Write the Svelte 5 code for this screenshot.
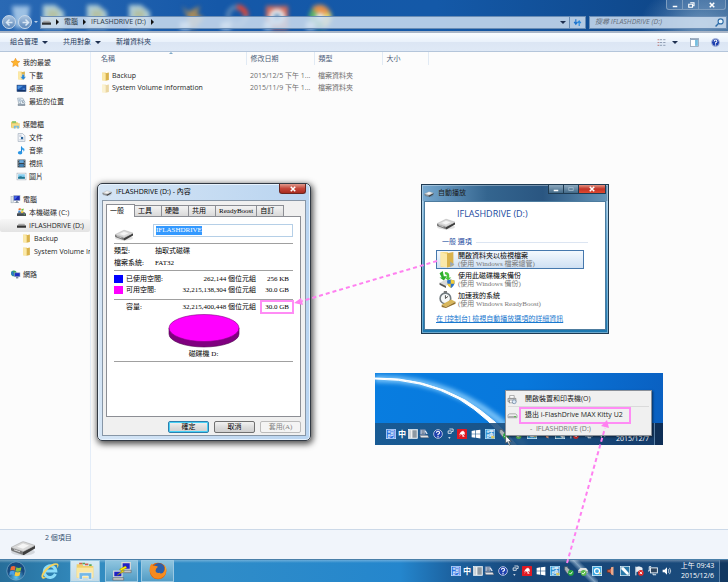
<script lang="ts">
  const groups = [
    {
      head: { icon: 'star', label: '我的最愛' },
      items: [
        { icon: 'download', label: '下載' },
        { icon: 'desktop', label: '桌面' },
        { icon: 'recent', label: '最近的位置' }
      ]
    },
    {
      head: { icon: 'library', label: '媒體櫃' },
      items: [
        { icon: 'doc', label: '文件' },
        { icon: 'music', label: '音樂' },
        { icon: 'video', label: '視訊' },
        { icon: 'picture', label: '圖片' }
      ]
    },
    {
      head: { icon: 'computer', label: '電腦' },
      items: [
        { icon: 'osdisk', label: '本機磁碟 (C:)' },
        { icon: 'usbdisk', label: 'IFLASHDRIVE (D:)', selected: true },
        { icon: 'folder', label: 'Backup', deep: true },
        { icon: 'folder', label: 'System Volume Information', deep: true }
      ]
    },
    { head: { icon: 'network', label: '網路' }, items: [] }
  ];

  const files = [
    { icon: 'folder', name: 'Backup', date: '2015/12/5 下午 1...', type: '檔案資料夾' },
    { icon: 'folderpale', name: 'System Volume Information', date: '2015/11/9 下午 1...', type: '檔案資料夾' }
  ];

  const tabs = ['一般', '工具', '硬體', '共用', 'ReadyBoost', '自訂'];

  const actions = [
    { icon: 'folderbig', title: '開啟資料夾以檢視檔案', sub: '(使用 Windows 檔案總管)' },
    { icon: 'backup', title: '使用此磁碟機來備份', sub: '(使用 Windows 備份)' },
    { icon: 'boost', title: '加速我的系統', sub: '(使用 Windows ReadyBoost)' }
  ];

  const ime = ['imelogo', 'imezh', 'imehalf', 'imepad'];
  const tray = ['avira', 'windows', 'translate', 'eject', 'safe', 'sync', 'horn', 'tool', 'flag', 'lan', 'volume'];

  let volumeName = $state('IFLASHDRIVE');
  let search = $state('');
  let activeTab = $state('一般');
</script>

{#snippet drive()}
  <svg class="drive" viewBox="0 0 26 16" aria-hidden="true">
    <ellipse cx="13" cy="12" rx="12" ry="3.5" fill="#000" opacity=".12" />
    <path d="M1 7.5 L13 11.5 L13 15 L2 11 Q1 10.500 1 9.500 Z" fill="#777" />
    <path d="M13 11.500 L25 5.500 V8.500 L14 15 H13 Z" fill="#3e3e3e" />
    <path d="M1 7.500 L12 2 Q13 1.500 14.500 2 L25 5.500 L13.500 11.500 Z" fill="#d9d9d9" stroke="#999" stroke-width=".5" />
    <path d="M7 6.800 L13 3.500 L19 5.500 L13 8.800 Z" fill="#f5f5f5" />
    <path d="M4 9.800 L10 11.800" stroke="#ddd" stroke-width="1" />
  </svg>
{/snippet}

{#snippet icon(name: string)}
  <svg class="icon" viewBox="0 0 16 16" aria-hidden="true">
    {#if name === 'star'}
      <path d="M8 .5 L10.300 5.500 L15.700 6.200 L11.700 9.900 L12.800 15.300 L8 12.600 L3.200 15.300 L4.300 9.900 L.3 6.200 L5.700 5.500 Z" fill="#ffb52e" stroke="#e88a16" />
    {:else if name === 'folder' || name === 'folderpale' || name === 'folderbig' || name === 'download'}
      <g opacity={name === 'folderpale' ? 0.5 : 1}>
        <path d="M2 1 H9 V15 H2 Z" fill="#f4d983" />
        <path d="M8 2 L14 1 V14 L8 15.500 Z" fill="#d9b24b" />
        <path d="M2 1 L8 3 V15.500 L2 14 Z" fill="#fbe9a9" />
        {#if name === 'folderbig'}<path d="M11 10 L15 12.500 L11 15 Z" fill="#9aa7b5" />{/if}
      </g>
      {#if name === 'download'}
        <path d="M9 6 H13 V10 H16 L11 16 L6 10 H9 Z" fill="#2485d8" stroke="#fff" stroke-width=".5" />
      {/if}
    {:else if name === 'desktop'}
      <rect x="0" y="2" width="16" height="11" fill="#1c56ad" stroke="#203e6e" />
      <path d="M1 3 H11 L3 9 H1 Z" fill="#4a91de" />
      <path d="M1 12 H15" stroke="#122b55" stroke-width="2" />
      <path d="M10 9 H14" stroke="#b4d6f8" />
    {:else if name === 'recent'}
      <path d="M1 2 H10 L12 5 V12 H3 Z" fill="#e5edf3" stroke="#8496a5" />
      <path d="M3 5 H7 M3 7 H6" stroke="#6b8db0" />
      <circle cx="10" cy="10" r="4" fill="#eef6fb" stroke="#7590a5" />
      <path d="M10 7 V10 H12 M2 13 H14 V15 H2 Z" stroke="#567" fill="#c4d3de" />
    {:else if name === 'library'}
      <path d="M0 3 H5 L6 4 H12 V13 H0 Z" fill="#f4d26a" />
      <path d="M2 2 H9 V6 H2 Z" fill="#8cc56a" />
      <path d="M1 6 H15 V14 H1 Z" fill="#f6dc85" stroke="#d9b75b" stroke-width=".6" />
      <path d="M5 10 H14 V15 H11 V12 H8 V15 H5 Z" fill="#74b9e4" />
    {:else if name === 'doc'}
      <path d="M2 1 H10 L14 5 V15 H2 Z" fill="#f6f8fb" stroke="#8b9bad" />
      <path d="M4 4 H8 M4 6 H8 M4 12 H12" stroke="#9ab" />
      <rect x="7" y="7" width="4" height="4" fill="#29639c" />
    {:else if name === 'music'}
      <path d="M8 1 V11" stroke="#1e7fd0" stroke-width="2" />
      <ellipse cx="5.500" cy="12" rx="4" ry="3" fill="#2a95e4" />
      <path d="M8 0 Q9 4 13 5 Q14 8 12 10 Q12 6 8 6 Z" fill="#2f9fe9" />
    {:else if name === 'video'}
      <rect x="1" y="1" width="14" height="14" fill="#35424d" />
      <rect x="4" y="2" width="8" height="5" fill="#68aade" />
      <rect x="4" y="9" width="8" height="5" fill="#4384b8" />
      <path d="M2.500 2 V15 M13.500 2 V15" stroke="#dbe4ea" stroke-dasharray="1.500 1.500" />
    {:else if name === 'picture'}
      <rect x="0" y="2" width="16" height="12" fill="#fff" stroke="#96a5b3" />
      <rect x="2" y="4" width="12" height="8" fill="#84cdf0" />
      <path d="M2 9 Q7 6 10 9 Q12 8 14 9 V12 H2 Z" fill="#24758f" />
    {:else if name === 'computer'}
      <rect x="0" y="3" width="4" height="11" fill="#dfe5ea" stroke="#8795a1" stroke-width=".7" />
      <rect x="5" y="1" width="11" height="9" fill="#1b29b5" stroke="#a5b2bf" />
      <path d="M6 2 H12 L7 8 H6 Z" fill="#4a6de8" />
      <path d="M9 10 H12 V13 H14 V14 H6 V13 H9 Z" fill="#8593a0" />
    {:else if name === 'osdisk'}
      <path d="M0 10 L3 7 H13 L16 10 V14 H0 Z" fill="#71787f" />
      <path d="M0 10 H16 V14 H0 Z" fill="#434a50" />
      <rect x="12" y="11" width="2" height="1" fill="#5eea58" />
      <path d="M3 1 Q5 0 7 1 L6.500 4 Q5 3 2.500 4 Z" fill="#ef6a2f" />
      <path d="M8 1.500 Q10 2 12 1 L11.500 4.500 Q9 5 7.500 4.500 Z" fill="#75b83b" />
      <path d="M2.500 5 Q4 4 6.500 5 L6 8 Q4 7 2 8 Z" fill="#3d8de0" />
      <path d="M7.500 5.500 Q9 6 11.500 5.500 L11 8.500 Q9 9 7 8.500 Z" fill="#f5c631" />
    {:else if name === 'usbdisk'}
      <path d="M1 8 L3 5 H13 L15 8 Z" fill="#aaa" />
      <path d="M0 8 H16 V12 H0 Z" fill="#333" />
    {:else if name === 'network'}
      <circle cx="5" cy="6" r="5" fill="#3ba35b" />
      <path d="M2 2 Q6 3 4 6 Q7 8 4 11 Q-1 8 1 3 Z" fill="#2978d6" />
      <rect x="6" y="5" width="10" height="7" fill="#1c2fc0" stroke="#9eb0c2" />
      <path d="M9 12 H13 V15 H9 Z" fill="#778899" />
    {:else if name === 'backup'}
      <path d="M1 2 L4 0 L5 5 H8 L5 9 L1 6 H3 Z" fill="#2dad2d" />
      <path d="M6 1 Q11 1 10 6 L12 6 L9 9 L6 6 H8 Q8 3 6 3 Z" fill="#48c53b" />
      <path d="M1 11 L7 8 L12 10 L7 14 Z" fill="#dadada" />
      <path d="M1 11 L7 14 V16 L1 13 Z" fill="#555" />
      <path d="M11 8 L15 9 V12 Q14 15 12 16 Q8 14 8 9 Z" fill="#2c73c9" />
      <path d="M11.500 8 L15 9 V12 H11.500 Z M8 12 H11.500 V16 Q9 15 8 12 Z" fill="#f2cc36" />
    {:else if name === 'boost'}
      <rect x="5" y="0" width="3" height="2" fill="#777" />
      <circle cx="6.500" cy="7" r="5" fill="#f6f8f8" stroke="#727b80" stroke-width="1.500" />
      <path d="M6.500 4 V7 L9 5" stroke="#333" stroke-width=".8" fill="none" />
      <path d="M3 13 L12 8 L16 10 L7 15 Z" fill="#d8b65a" />
      <path d="M3 13 L7 15 L16 10 V12 L7 16 L3 15 Z" fill="#95722a" />
    {:else if name === 'help'}
      <circle cx="8" cy="8" r="7" fill="#1d3fae" stroke="#b9c4de" stroke-width="1.500" />
      <path d="M5.500 6 Q5.500 3.500 8 3.500 T10.500 6 Q10.500 7.500 8 8.500 V10" stroke="#fff" stroke-width="1.800" fill="none" />
      <circle cx="8" cy="12.300" r="1.100" fill="#fff" />
    {:else if name === 'view'}
      <path d="M1 3 H4 M1 8 H4 M1 13 H4" stroke="#c08a8a" stroke-width="2" />
      <path d="M5 3 H9 M11 3 H15 M5 8 H9 M11 8 H15 M5 13 H9 M11 13 H15" stroke="#8292a8" stroke-width="1.500" />
    {:else if name === 'pane'}
      <rect x="1" y="1" width="14" height="14" fill="#fff" stroke="#7f93a9" stroke-width="1.200" />
      <rect x="9" y="2" width="5" height="12" fill="#76bfe0" />
      <path d="M1 2.500 H15" stroke="#8fa6bd" stroke-width="2" />
    {:else if name === 'magnify'}
      <circle cx="10" cy="6" r="4.500" fill="#e6f3fc" stroke="#2f6da8" stroke-width="2" />
      <path d="M7 9 L1 15" stroke="#2f6da8" stroke-width="2.500" />
    {:else if name === 'refresh'}
      <path d="M5 2 V9 M2 7 L5 11 L8 7" stroke="#1c72cc" stroke-width="2" fill="none" />
      <path d="M11 14 V7 M8 9 L11 5 L14 9" stroke="#2989dd" stroke-width="2" fill="none" />
    {:else if name === 'imelogo'}
      <rect width="16" height="16" rx="1" fill="#e4f0ff" />
      <rect x="1" y="1" width="14" height="14" fill="#2a6fe2" />
      <text x="8" y="12.500" font-size="12" text-anchor="middle" fill="#fff">詞</text>
    {:else if name === 'imezh'}
      <text x="8" y="13" font-size="13" font-weight="700" text-anchor="middle" fill="#fff">中</text>
    {:else if name === 'imehalf'}
      <rect x="1" y="1" width="14" height="14" fill="#f3f3f3" stroke="#fff" />
      <rect x="7" y="2" width="7" height="12" fill="#8e99a3" />
      <rect x="2" y="2" width="3" height="12" fill="#c9d0d6" />
    {:else if name === 'imepad'}
      <path d="M2 1 H10 V9 H2 Z" fill="#c9d6ee" stroke="#51719c" />
      <path d="M4 3 H9 M4 5 H9 M4 7 H9" stroke="#345" />
      <path d="M1 10 H14 L16 14 H3 Z" fill="#e1e4e8" stroke="#445" stroke-width=".7" />
      <path d="M10 3 L13 8" stroke="#e3e9f5" stroke-width="2" />
    {:else if name === 'restore'}
      <path d="M7 0 H13 V4 H11 M5 3 H10 V7 H5 Z" stroke="#fff" stroke-width="1.200" fill="none" />
      <path d="M5 13 H9 L7 15.500 Z" fill="#fff" />
    {:else if name === 'avira'}
      <rect width="16" height="16" rx="1" fill="#e01923" />
      <path d="M4 9 Q6 3 10 3 Q13 5 12 9 Q10 7 8 9 Q6 7 4 9 Z M6 9 L4 12 M9 8 L9 12 H12" fill="#fff" stroke="#fff" stroke-width=".6" />
    {:else if name === 'windows'}
      <path d="M1 3 L7 2 V7.500 H1 Z M8 2 L15 1 V7.500 H8 Z M1 8.500 H7 V14 L1 13 Z M8 8.500 H15 V15 L8 14 Z" fill="#fff" />
    {:else if name === 'translate'}
      <rect width="16" height="16" fill="#bfe5f7" />
      <rect x="1" y="1" width="14" height="14" fill="#3090d5" />
      <text x="8" y="12.500" font-size="12" text-anchor="middle" fill="#fff">譯</text>
      <path d="M10 11 H15 V15 H10 Z" fill="#ddc65d" />
    {:else if name === 'eject'}
      <path d="M1 1 H6 V3 L9 5 V13 L5 12 L1 6 Z" fill="#a9b4b8" stroke="#47545d" />
      <circle cx="11" cy="11" r="4.500" fill="#23a53b" />
      <path d="M8.500 11 L10.500 13 L13.500 9" stroke="#fff" stroke-width="1.500" fill="none" />
    {:else if name === 'safe'}
      <path d="M0 7 L4 3 H13 L16 7 V11 H0 Z" fill="#dfe4e2" />
      <path d="M0 8 H16 V11 H0 Z" fill="#a2aaa8" />
      <circle cx="9" cy="11" r="4.500" fill="#58bb4b" />
      <path d="M6.500 11 L8.500 13 L11.500 9" stroke="#fff" stroke-width="1.500" fill="none" />
    {:else if name === 'sync'}
      <rect width="16" height="16" rx="1" fill="#f3fbff" />
      <rect x="1" y="1" width="14" height="14" fill="#3aa5df" />
      <circle cx="8" cy="8" r="4" fill="none" stroke="#fff" stroke-width="2" />
      <path d="M11 10 L15 11 L12 14 Z" fill="#ffd55c" />
    {:else if name === 'horn'}
      <path d="M2 6 H5 L10 2 V14 L5 10 H2 Z" fill="#c9654d" stroke="#6b2418" />
      <path d="M8 2 L12 1 V15 L8 13 Z" fill="#eaaa8d" />
    {:else if name === 'tool'}
      <rect width="16" height="16" fill="#f3f8fc" />
      <rect x="1" y="1" width="14" height="14" fill="#2778a9" />
      <path d="M2 2 H6 L14 11 V14 H11 L2 5 Z" fill="#fff" />
    {:else if name === 'flag'}
      <path d="M3 1 V15" stroke="#fff" stroke-width="1.500" />
      <path d="M4 2 Q8 0 13 3 V9 Q8 7 4 9 Z" fill="#e6edf2" stroke="#fff" />
      <circle cx="11" cy="11" r="4.500" fill="#df2525" />
      <path d="M9 9 L13 13 M13 9 L9 13" stroke="#fff" stroke-width="1.500" />
    {:else if name === 'lan'}
      <rect x="4" y="3" width="11" height="8" fill="#30465f" stroke="#eef5fa" stroke-width="1.500" />
      <path d="M8 12 V14 H13 M2 1 V8 H0 M2 1 H5" stroke="#eef5fa" stroke-width="1.500" fill="none" />
    {:else if name === 'volume'}
      <path d="M1 6 H4 L8 2 V14 L4 10 H1 Z" fill="#fff" />
      <path d="M10 5 Q12 8 10 11 M12 3 Q16 8 12 13" stroke="#d7e3ec" stroke-width="1.300" fill="none" />
    {:else if name === 'printer'}
      <path d="M3 1 H11 V6 H3 Z" fill="#fff" stroke="#777" />
      <path d="M0 6 H14 V12 H0 Z" fill="#d2d6da" stroke="#666" />
      <rect x="3" y="9" width="8" height="5" fill="#fff" stroke="#777" />
      <circle cx="11" cy="12" r="3.500" fill="#dbe8f5" stroke="#4d6b8c" />
    {:else if name === 'ejectdisk'}
      <path d="M0 8 Q0 6 3 5 H13 Q16 6 16 8 V12 H0 Z" fill="#eee" stroke="#777" />
      <path d="M1 9 H15 V12 H1 Z" fill="#aaa" />
      <rect x="11" y="9" width="3" height="2" fill="#48bd3c" />
    {/if}
  </svg>
{/snippet}

{#snippet notification(date: string)}
  <div class="tray">
    <div class="ime">
      {#each ime as name}{@render icon(name)}{/each}
    </div>
    <div class="langbar">
      {@render icon('help')}
      {@render icon('restore')}
      {@render icon('avira')}
    </div>
    {#each tray.slice(1) as name}{@render icon(name)}{/each}
    <time class="clock"><span>上午 09:43</span><span>{date}</span></time>
    <button class="peek" aria-label="顯示桌面"></button>
  </div>
{/snippet}

<div class="screen">
  <header class="titlebar">
    <svg class="blurred" viewBox="0 0 360 32" aria-hidden="true">
      <g fill="#dff0e2" opacity=".75">
        <path d="M12 6 H30 L27 28 H15 Z" fill="#c5dff5" />
        <path d="M43 5 H55 L64 12 V28 H43 Z" />
        <path d="M87 5 H98 L107 12 V28 H87 Z" />
        <path d="M129 5 H141 L150 12 V28 H129 Z" />
        <path d="M48 10 H58 V24 H48 Z M92 10 H102 V24 H92 Z M134 10 H144 V24 H134 Z" fill="#e6e2a0" />
      </g>
      <path d="M182 6 L188 12 L200 6 L197 14 L204 18 L196 28 H184 L188 18 Z" fill="#a58a5b" />
      <circle cx="237" cy="16" r="9" fill="none" stroke="#5f87b4" stroke-width="4" />
      <path d="M237 7 A9 9 0 0 1 246 16" stroke="#e64635" stroke-width="5" fill="none" />
      <rect x="266" y="6" width="22" height="23" fill="#d46a58" />
      <circle cx="277" cy="17" r="8" fill="#e8eef2" />
      <circle cx="277" cy="17" r="3" fill="#4275a8" />
      <circle cx="320" cy="17" r="11" fill="#5db567" />
      <path d="M320 17 L312 8 A11 11 0 0 1 330 12 Z" fill="#e8924a" />
      <path d="M320 17 L330 12 A11 11 0 0 1 324 28 Z" fill="#e8dc6d" />
      <circle cx="320" cy="17" r="4" fill="#e4eef5" />
      <path d="M180 22 H190 V29 H180 Z M221 22 H231 V29 H221 Z M264 22 H272 V29 H264 Z M306 22 H315 V29 H306 Z" fill="#dce9f5" />
    </svg>
    <div class="winctl">
      <button aria-label="最小化"><svg viewBox="0 0 10 8"><path d="M2 6 H8" stroke="#fff" stroke-width="2" /></svg></button>
      <button aria-label="還原"><svg viewBox="0 0 10 8"><path d="M4 1 H9 V5 H7 M2 3 H7 V7 H2 Z" stroke="#fff" fill="none" stroke-width="1.500" /></svg></button>
      <button class="wide" aria-label="關閉"><svg viewBox="0 0 10 8"><path d="M2 1 L8 7 M8 1 L2 7" stroke="#fff" stroke-width="2" /></svg></button>
    </div>
    <div class="navrow">
      <div class="navbtns">
        <button aria-label="上一頁"><svg viewBox="0 0 12 12"><path d="M10 6 H3 M6 2 L2 6 L6 10" /></svg></button>
        <button aria-label="下一頁"><svg viewBox="0 0 12 12"><path d="M2 6 H9 M6 2 L10 6 L6 10" /></svg></button>
        <i class="down light"></i>
      </div>
      <nav class="address">
        {@render icon('usbdisk')}
        <i class="right"></i><a href="#computer">電腦</a>
        <i class="right"></i><a href="#d">IFLASHDRIVE (D:)</a>
        <i class="right"></i>
        <i class="down last"></i>
      </nav>
      <button class="refresh" aria-label="重新整理">{@render icon('refresh')}</button>
      <label class="search">
        <input type="text" aria-label="搜尋" placeholder="搜尋 IFLASHDRIVE (D:)" bind:value={search} />
        {@render icon('magnify')}
      </label>
    </div>
  </header>

  <div class="toolbar">
    <button>組合管理 <i class="down"></i></button>
    <button>共用對象 <i class="down"></i></button>
    <button>新增資料夾</button>
    <div class="tools">
      <button aria-label="變更檢視">{@render icon('view')}<i class="down"></i></button>
      <button aria-label="預覽窗格">{@render icon('pane')}</button>
      <button aria-label="說明">{@render icon('help')}</button>
    </div>
  </div>

  <main>
    <aside>
      {#each groups as group}
        <ul>
          <li class="head">{@render icon(group.head.icon)}{group.head.label}</li>
          {#each group.items as item}
            <li class:selected={item.selected} class:deep={item.deep}>{@render icon(item.icon)}{item.label}</li>
          {/each}
        </ul>
      {/each}
    </aside>
    <section class="listing">
      <i class="sort"></i>
      <table>
        <thead>
          <tr><th class="c-name">名稱</th><th class="c-date">修改日期</th><th class="c-type">類型</th><th class="c-size">大小</th></tr>
        </thead>
        <tbody>
          {#each files as file}
            <tr>
              <td><span class="fname">{@render icon(file.icon)}{file.name}</span></td>
              <td class="muted">{file.date}</td>
              <td class="muted">{file.type}</td>
              <td></td>
            </tr>
          {/each}
        </tbody>
      </table>
    </section>
  </main>

  <footer class="details">
    {@render drive()}
    <span>2 個項目</span>
  </footer>

  <div class="taskbar">
    <button class="start" aria-label="開始">
      <svg viewBox="0 0 24 24">
        <defs>
          <radialGradient id="orb" cy=".85"><stop offset="0" stop-color="#5cc5f0" /><stop offset="1" stop-color="#164a80" /></radialGradient>
        </defs>
        <circle cx="12" cy="12" r="11" fill="url(#orb)" stroke="#7faecb" stroke-width=".8" />
        <path d="M6 7 Q9 5 11.500 7 L10.500 11.500 Q8 10 5 11.500 Z" fill="#ee6a35" />
        <path d="M12.500 7.500 Q15 9 18.500 7.500 L17.500 12 Q14 13.500 11.500 12 Z" fill="#8cc63c" />
        <path d="M4.800 12.500 Q8 11 10.300 12.500 L9.300 17 Q7 15.500 4 17 Z" fill="#4a9fe6" />
        <path d="M11.300 13 Q14 14.500 17.300 13 L16.300 17.500 Q13 19 10.300 17.500 Z" fill="#fbca3a" />
      </svg>
    </button>
    <button class="ie" aria-label="Internet Explorer">
      <svg viewBox="0 0 24 24">
        <path d="M18.500 15.500 A7 7 0 1 1 19 12 H7" fill="none" stroke="#8bdcfa" stroke-width="3.500" />
        <path d="M3 21 Q-1 18 7 9 Q16 1 21 3 Q24 5 20 9 Q22 4 19 4.500 Q12 6 6 14 Q1 21 8 19 Q5 22 3 21 Z" fill="#f6d25c" />
      </svg>
    </button>
    <button class="task active" aria-label="檔案總管">
      <svg viewBox="0 0 24 24">
        <path d="M2 4 H9 L10 6 H22 V20 H2 Z" fill="#f1cf6b" />
        <path d="M5 3 H9 M12 4 H16" stroke="#d4604a" stroke-width="2" />
        <path d="M9 3 H12 M17 5 H20" stroke="#5aa557" stroke-width="2" />
        <path d="M2 8 H22 V20 H2 Z" fill="#fae7a2" />
        <path d="M5 14 H20 V22 H16 V18 H9 V22 H5 Z" fill="#73b8e6" stroke="#fff" stroke-width=".6" />
      </svg>
    </button>
    <button class="task" aria-label="PuTTY">
      <svg viewBox="0 0 24 24">
        <path d="M12 2 H22 V10 H12 Z M2 12 H12 V19 H2 Z" fill="#2020c5" stroke="#d7d7d7" stroke-width="1.500" />
        <path d="M11 11 H23 V14 H11 Z M1 20 H14 V23 H1 Z" fill="#c6c6c6" stroke="#555" stroke-width=".6" />
        <path d="M16 6 L9 10 L12 12 L6 17 L15 12 L12 11 L18 8 Z" fill="#fff000" stroke="#897b00" stroke-width=".5" />
      </svg>
    </button>
    <button class="task" aria-label="Firefox">
      <svg viewBox="0 0 24 24">
        <circle cx="12" cy="12" r="10" fill="#e66000" />
        <circle cx="13" cy="9.500" r="7" fill="#2e5fa8" />
        <path d="M2 10 Q2 5 5 3 L6 6 Q9 5 12 7 Q9 9 9 12 Q10 15 14 14 Q17 17 20 11 Q21 7 19 4 Q24 9 21 16 Q15 24 7 20 Q2 16 2 10 Z" fill="#f58a1f" />
        <path d="M20 5 Q23 11 18 18 Q22 14 20 5 Z" fill="#ffd23d" />
      </svg>
    </button>
    {@render notification('2015/12/6')}
  </div>

  <section class="window props">
    <div class="caption">
      {@render drive()}<h2>IFLASHDRIVE (D:) - 內容</h2>
      <button class="close" aria-label="關閉"><svg viewBox="0 0 10 8"><path d="M2 1 L8 7 M8 1 L2 7" stroke="#fff" stroke-width="2" /></svg></button>
    </div>
    <div class="client">
      <div class="tabs">
        {#each tabs as tab}
          <button class:on={tab === activeTab} onclick={() => (activeTab = tab)}>{tab}</button>
        {/each}
      </div>
      <div class="sheet">
        <div class="volume">
          {@render drive()}
          <span class="field">
            <input type="text" aria-label="磁碟區名稱" bind:value={volumeName} />
          </span>
        </div>
        <dl class="meta">
          <dt>類型:</dt><dd>抽取式磁碟</dd>
          <dt>檔案系統:</dt><dd>FAT32</dd>
        </dl>
        <table class="space">
          <tbody>
            <tr><th><i class="chip used"></i>已使用空間:</th><td>262,144 個位元組</td><td>256 KB</td></tr>
            <tr><th><i class="chip free"></i>可用空間:</th><td>32,215,138,304 個位元組</td><td>30.0 GB</td></tr>
          </tbody>
          <tbody class="total">
            <tr><th><i class="chip"></i>容量:</th><td>32,215,400,448 個位元組</td><td><mark>30.0 GB</mark></td></tr>
          </tbody>
        </table>
        <figure>
          <svg viewBox="0 0 72 34" aria-hidden="true">
            <path d="M1 14 V20 A35 13 0 0 0 71 20 V14 Z" fill="#800080" stroke="#4d004d" stroke-width=".6" />
            <ellipse cx="36" cy="14" rx="35" ry="13.500" fill="#f0f" stroke="#800080" stroke-width=".6" />
          </svg>
          <figcaption>磁碟機 D:</figcaption>
        </figure>
      </div>
      <div class="buttons">
        <button class="default">確定</button>
        <button>取消</button>
        <button disabled>套用(A)</button>
      </div>
    </div>
  </section>

  <section class="window autoplay">
    <div class="caption">
      {@render drive()}<h2>自動播放</h2>
      <div class="ctl">
        <button aria-label="最小化"><svg viewBox="0 0 10 8"><path d="M2 6 H8" stroke="#fff" stroke-width="2" /></svg></button>
        <button aria-label="最大化"><svg viewBox="0 0 10 8"><path d="M2 2 H8 V6 H2 Z" stroke="#a9c0d2" fill="none" /></svg></button>
        <button class="close" aria-label="關閉"><svg viewBox="0 0 10 8"><path d="M2 1 L8 7 M8 1 L2 7" stroke="#fff" stroke-width="2" /></svg></button>
      </div>
    </div>
    <div class="client">
      <div class="device">{@render drive()}<h3>IFLASHDRIVE (D:)</h3></div>
      <h4>一般 選項</h4>
      {#each actions as action, i}
        <button class="action" class:hot={i === 0}>
          {@render icon(action.icon)}
          <span><b>{action.title}</b><small>{action.sub}</small></span>
        </button>
      {/each}
      <a href="#autoplay">在 [控制台] 檢視自動播放選項的詳細資訊</a>
    </div>
  </section>

  <section class="snip">
    <svg class="sky" viewBox="0 0 288 72" preserveAspectRatio="none" aria-hidden="true">
      <defs>
        <filter id="glow"><feGaussianBlur stdDeviation="2" /></filter>
      </defs>
      <path d="M0 6 Q78 4 137 58 L150 74" fill="none" stroke="#8fd2ff" stroke-width="7" filter="url(#glow)" opacity=".8" />
      <path d="M0 5 Q48 4 90 27 Q124 48 143 74 L136 74 Q115 45 84 26 Q48 6 0 6 Z" fill="#fff" stroke="#fff" />
    </svg>
    <div class="minibar">{@render notification('2015/12/7')}</div>
    <menu>
      <li>{@render icon('printer')}<button>開啟裝置和印表機(O)</button></li>
      <li class="sep">{@render icon('ejectdisk')}<button class="framed">退出 i-FlashDrive MAX Kitty U2</button></li>
      <li class="off">- &nbsp;IFLASHDRIVE (D:)</li>
    </menu>
    <svg class="cursor" viewBox="0 0 12 18" aria-hidden="true"><path d="M1 1 V14 L4 11 L7 17 L9 16 L6.500 10.500 H11 Z" fill="#fff" stroke="#222" stroke-width=".8" /></svg>
  </section>

  <svg class="arrows" width="728" height="582" aria-hidden="true">
    <g stroke="#ff80f0" stroke-width="2" fill="none" stroke-dasharray="4 3">
      <path d="M437 261 L302 301" />
      <path d="M567 563 L605 428" />
    </g>
    <path d="M294 303 L301 298 L303 305 Z M607 420 L601 426 L609 428 Z" fill="#ff80f0" />
  </svg>
</div>

<style>
  :global(body) { background: #fcfcfc; }
  .screen {
    position: relative;
    min-height: 100vh;
    display: flex;
    flex-direction: column;
    overflow: hidden;
    font: 7px/12px "Open Sans", "Noto Sans CJK TC", sans-serif;
    color: #1c1c1c;
  }
  .screen * { box-sizing: border-box; }
  button, input { font: inherit; color: inherit; padding: 0; margin: 0; border: 0; background: none; }
  a { color: inherit; text-decoration: none; }
  ul, dl, dd, menu, figure, h2, h3, h4 { margin: 0; padding: 0; list-style: none; font-size: 7px; font-weight: 400; }
  table { border-collapse: collapse; }
  th, td { padding: 0; font-weight: 400; text-align: left; }
  svg { display: block; }
  .icon { width: 9px; height: 9px; flex: none; overflow: visible; }
  .drive { width: 20px; height: 12px; flex: none; }
  .down, .right { display: inline-block; border: 2px solid transparent; flex: none; }
  .down { border-width: 3px 3px 0; border-top-color: #1e3050; }
  .down.light { border-width: 2px 2px 0; border-top-color: #b9cfe8; }
  .right { border-width: 3px 0 3px 3px; border-left-color: #111; }

  /* title bar */
  .titlebar {
    position: relative;
    height: 33px;
    background:
      radial-gradient(60px 40px at 700px 24px, rgba(160, 190, 215, .6), transparent),
      linear-gradient(90deg, #2a69b4, #1558a8 30%, #1459a8 60%, #0f4789 92%, #28598f);
    border-bottom: 2px solid #a9b6c8;
  }
  .blurred { position: absolute; left: 0; top: 0; width: 360px; height: 32px; filter: blur(2px); }
  .winctl {
    position: absolute; right: 2px; top: 0;
    display: flex; height: 10px;
    border: 1px solid #7d9dbf; border-top: 0; border-radius: 0 0 3px 3px;
    background: rgba(120, 155, 195, .3);
  }
  .winctl button { width: 16px; display: grid; place-items: center; border-right: 1px solid #7d9dbf; }
  .winctl .wide { width: 26px; border: 0; }
  .winctl svg { width: 8px; height: 6px; }
  .navrow { position: relative; display: flex; align-items: center; padding: 15px 1px 0 2px; }
  .navbtns { display: flex; align-items: center; gap: 2px; width: 38px; }
  .navbtns button {
    width: 14px; height: 14px; border-radius: 50%; border: 1px solid #c7d8ea;
    display: grid; place-items: center; background: linear-gradient(#a9c3df, #5f8abc);
  }
  .navbtns svg { width: 9px; height: 9px; fill: none; stroke: #d9e7f4; stroke-width: 2; }
  .address, .refresh, .search {
    height: 13px; border: 1px solid #6a8db5;
    background: rgba(205, 221, 239, .86);
    display: flex; align-items: center;
  }
  .address { flex: 1; gap: 5px; padding: 0 3px 0 1px; color: #2d3b4a; min-width: 0; }
  .last { margin-left: auto; }
  .refresh { width: 16px; justify-content: center; border-left: 0; margin-right: 3px; }
  .search { width: 138px; padding: 0 2px 0 5px; }
  .search input { flex: 1; min-width: 0; font-style: italic; outline: 0; }
  .search input::placeholder { color: #66707c; opacity: 1; }

  .toolbar {
    display: flex; align-items: center; gap: 15px;
    height: 19px; padding: 0 8px 0 10px;
    background: linear-gradient(#fafdff, #e9f1fb 50%, #dce6f4 52%, #dfe9f6);
    border-bottom: 1px solid #b4c5da;
    color: #1e395b;
  }
  .toolbar button { display: flex; align-items: center; gap: 4px; }
  .tools { display: flex; gap: 12px; margin-left: auto; }
  .tools button:first-child { gap: 6px; }

  main { flex: 1; display: flex; background: #fcfcfc; }
  aside {
    width: 91px; flex: none; padding-top: 4px; overflow: hidden;
    display: flex; flex-direction: column; gap: 10px;
    border-right: 1px solid #e4edf8;
  }
  aside li { display: flex; align-items: center; gap: 3px; height: 13px; padding-left: 17px; white-space: nowrap; }
  aside .head { padding-left: 11px; }
  aside .deep { padding-left: 22px; }
  aside .selected { background: linear-gradient(#f7f7f7, #e3e3e3); border-radius: 2px; }
  .listing { position: relative; flex: 1; min-width: 0; }
  .sort { position: absolute; left: 78px; top: 0; border: 2px solid transparent; border-top: 0; border-bottom-color: #7fa9c8; }
  th { color: #4c607a; }
  thead th { border-right: 1px solid #e1eaf4; padding: 1px 0 0 4px; }
  thead .c-name { width: 155px; padding-left: 10px; }
  .c-date, .c-type { width: 68px; }
  .c-size { width: 46px; }
  .listing tbody::before { content: ''; display: block; height: 5px; }
  .listing td { white-space: nowrap; padding-left: 4px; }
  .fname { display: flex; align-items: center; gap: 2px; padding-left: 6px; }
  .muted { color: #6d6d6d; }

  .details {
    display: flex; gap: 9px; height: 30px; padding: 2px 10px;
    background: #f1f5fb; border-top: 1px solid #ccd9e8; color: #35506f;
  }
  .details .drive { width: 26px; height: 16px; margin-top: 8px; }

  /* taskbar */
  .taskbar {
    display: flex; align-items: center; height: 23px; padding-left: 5px; gap: 3px;
    background:
      linear-gradient(rgba(255, 255, 255, .3), transparent 3px),
      linear-gradient(45deg, transparent 38%, rgba(190, 215, 235, .6) 50%, transparent 62%) 570px 0 / 28px 100% no-repeat,
      linear-gradient(90deg, #276e9a, #338cc0 12%, #2f8cc8 30%, #2486cd 55%, #1c62a0 62%, #174577 72%, #1b4c7d);
    border-top: 1px solid #4a7fa9;
  }
  .start, .ie { width: 22px; }
  .ie { margin: 0 6px 0 9px; }
  .taskbar > button svg { width: 20px; height: 20px; margin: auto; }
  .taskbar > .task { width: 33px; height: 22px; border: 1px solid #9ac8e2; background: linear-gradient(#8fc5df, #529cc5); }
  .taskbar > .active { background: linear-gradient(#d6ebf5, #c3dbe6); width: 30px; margin-right: 2px; }
  .tray { display: flex; align-items: center; gap: 4px; height: 100%; margin-left: auto; color: #fff; }
  .tray .icon { width: 10px; height: 10px; }
  .ime { display: flex; gap: 1px; }
  .langbar { display: flex; gap: 2px; }
  .clock { display: flex; flex-direction: column; width: 43px; line-height: 10px; text-align: center; }
  .peek { width: 9px; height: 100%; margin-left: -4px; background: rgba(10, 35, 70, .5); border-left: 1px solid #5b82a8; }

  /* floating windows */
  .window { position: absolute; display: flex; flex-direction: column; padding: 0 4px 4px; }
  .caption { display: flex; align-items: center; gap: 4px; height: 16px; }
  .caption svg { width: 8px; height: 6px; margin: auto; }
  .caption .drive { width: 10px; height: 6px; margin: 2px 0 0; }
  .close { background: linear-gradient(#e09a8d, #c4463a 50%, #a92c20); }
  .props {
    left: 97px; top: 183px; width: 214px;
    border: 1px solid #323a44; border-radius: 5px;
    background: linear-gradient(90deg, #d5e5f5, #b9d4f0);
    box-shadow: 1px 2px 6px 1px rgba(0, 0, 0, .7), inset 0 0 0 1px #e7f2fd;
    font-family: "Liberation Serif", "Noto Sans CJK TC", serif;
    color: #000;
  }
  .props h2 { font-family: "Open Sans", "Noto Sans CJK TC", sans-serif; }
  .props .close { align-self: flex-start; width: 27px; height: 10px; margin-left: auto; border: 1px solid #6b2620; border-top: 0; border-radius: 0 0 3px 3px; }
  .props .client { background: #f0f0f0; border: 1px solid #8796a6; padding: 2px 4px 1px 3px; }
  .tabs { display: flex; align-items: flex-end; height: 13px; }
  .tabs button { height: 11px; padding: 0 6px 0 3px; border: 1px solid #8c8e94; border-left-width: 0; border-bottom: 0; background: linear-gradient(#f3f3f3, #d9d9d9); line-height: 10px; min-width: 27px; text-align: left; }
  .tabs button:nth-child(5) { padding-right: 3px; }
  .tabs .on { height: 13px; min-width: 29px; border-left-width: 1px; background: #fff; margin-bottom: -1px; position: relative; }
  .sheet { background: #fff; border: 1px solid #8c8e94; padding: 7px 7px 0; height: 201px; }
  .volume { display: flex; justify-content: space-between; align-items: center; height: 20px; padding-bottom: 6px; border-bottom: 1px solid #a0a0a0; }
  .volume .drive { margin-top: 8px; }
  .field { width: 140px; height: 13px; border: 1px solid #b5cfe7; display: flex; align-items: center; padding-left: 2px; background: linear-gradient(#3399ff, #3399ff) 2px 1px / 46px 9px no-repeat; }
  .field input { width: 100%; color: #fff; outline: 0; line-height: 9px; }
  .meta { display: grid; grid-template-columns: 41px 1fr; padding: 1px 0; border-bottom: 1px solid #a0a0a0; }
  .space { width: 100%; margin-top: 3px; line-height: 11px; }
  .space th { color: #000; white-space: nowrap; }
  .space td { text-align: right; white-space: nowrap; }
  .space td:last-child { width: 37px; padding-right: 4px; }
  .chip { display: inline-block; width: 9px; height: 8px; margin-right: 3px; vertical-align: middle; }
  .used { background: #00f; }
  .free { background: #f0f; }
  .total::before { content: ''; display: block; height: 3px; }
  .total tr { border-top: 1px solid #a0a0a0; }
  .total th, .total td { padding-top: 2px; }
  mark { display: inline-block; background: none; color: inherit; outline: 2px solid #ff8cf5; padding: 0 3px; margin-right: -3px; line-height: 10px; }
  figure { text-align: center; border-bottom: 1px solid #a0a0a0; line-height: 13px; }
  figure svg { width: 72px; height: 34px; margin: 1px auto 0; }
  .buttons { display: flex; justify-content: flex-end; gap: 5px; padding: 4px 0 1px; }
  .buttons button { width: 41px; height: 12px; line-height: 10px; border: 1px solid #707070; border-radius: 2px; background: linear-gradient(#f2f2f2, #ddd 50%, #cfcfcf); }
  .buttons .default { border-color: #2b7fae; box-shadow: inset 0 0 0 1px #48d0f5; }
  .buttons button:disabled { color: #838383; border-color: #bbb; background: #f4f4f4; }

  .autoplay {
    left: 421px; top: 184px; width: 188px; padding: 0 2px 3px;
    border: 1px solid #1f3b52;
    background: linear-gradient(90deg, #77a9d0, #34658f 35%, #2a5681 65%, #6595b8) top / 100% 16px no-repeat, linear-gradient(#a2c7e2, #5ba3d0 40%, #1d78b0);
    box-shadow: inset 0 0 0 1px rgba(255, 255, 255, .35);
  }
  .autoplay .ctl { display: flex; align-self: flex-start; margin-left: auto; height: 9px; border: 1px solid #1f3b52; border-top: 0; }
  .autoplay .ctl button { width: 15px; background: linear-gradient(#8da9bf, #426987); border-right: 1px solid #1f3b52; }
  .autoplay .ctl .close { width: 26px; border: 0; background: linear-gradient(#e39281, #c13327 50%, #e0482d); }
  .autoplay .client { background: #fff; border: 1px solid #4d7c9f; padding: 6px 21px 4px 11px; }
  .device { display: flex; gap: 1px; height: 28px; align-items: flex-start; }
  .device .drive { margin-top: 10px; }
  h3 { font-size: 9px; color: #1c4aa0; line-height: 12px; }
  h4 { display: flex; align-items: center; gap: 4px; padding-left: 6px; height: 12px; color: #1c4aa0; margin-bottom: 2px; }
  h4::after { content: ''; flex: 1; height: 1px; background: #dce5f2; margin-right: -4px; }
  .action {
    display: flex; align-items: center; gap: 2px; width: 100%; height: 19px; margin-bottom: 1px; padding-left: 1px;
    border: 1px solid transparent; text-align: left;
  }
  .action .icon { width: 18px; height: 17px; }
  .action span { display: flex; flex-direction: column; line-height: 8px; color: #000; }
  .action b { font-weight: 400; }
  .action small { font: 7px/8px "Liberation Serif", "Noto Sans CJK TC", serif; color: #777; }
  .hot { border-color: #4678ad; background: linear-gradient(#f4f9fe, #cfe0f3); }
  .autoplay a { display: block; color: #1979cf; text-decoration: underline; margin-top: 4px; white-space: nowrap; }

  .snip {
    position: absolute; left: 375px; top: 373px; width: 288px; height: 72px;
    display: flex; flex-direction: column; justify-content: flex-end;
    background: linear-gradient(100deg, #087de0, #0878dc 50%, #0a5fc0);
  }
  .sky { position: absolute; inset: 0; width: 100%; height: 100%; }
  .minibar { position: relative; display: flex; height: 22px; background: linear-gradient(90deg, rgba(26, 87, 140, .9), rgba(28, 75, 120, .88) 60%, rgba(20, 55, 98, .95)); }
  menu {
    position: absolute; left: 130px; top: 17px; width: 147px; padding: 1px 2px;
    background: #f0f0f0; border: 1px solid #8a9099; box-shadow: 1px 1px 2px rgba(0, 0, 0, .5);
  }
  menu li { display: flex; align-items: center; gap: 4px; height: 14px; }
  menu button { padding-left: 4px; text-align: left; }
  .sep { border-top: 1px solid #dadada; height: 17px; }
  .framed { outline: 2px solid #ff8cf5; width: 108px; height: 13px; white-space: nowrap; }
  .off { height: 11px; padding-left: 22px; color: #777; }
  .cursor { position: absolute; left: 130px; top: 62px; width: 7px; height: 11px; }
  .arrows { position: absolute; left: 0; top: 0; pointer-events: none; }
</style>
